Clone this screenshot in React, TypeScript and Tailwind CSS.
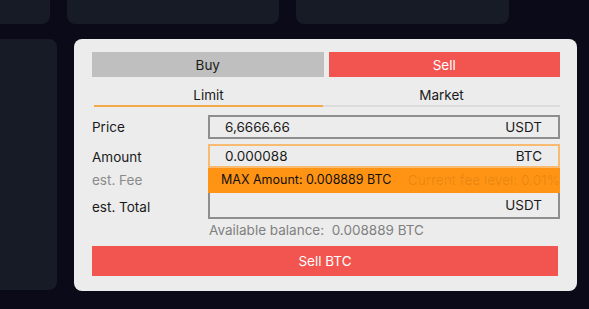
import { FC } from "react"

const Field: FC<{ value?: string; unit: string; border: string }> = ({ value, unit, border }) => (
  <div className={`flex flex-1 items-center justify-between border-2 pl-[15px] pr-[16px] ${border}`}>
    <span>{value}</span>
    <span>{unit}</span>
  </div>
)

const App: FC = () => {
  return (
    <div className="flex h-[309px] w-[589px] flex-col gap-[15px] overflow-hidden bg-[#0a0a19] text-[13.5px] text-[#1a1a1a]" style={{ fontFamily: "Inter, 'Noto Sans', sans-serif" }}>
      <div className="flex h-[24px] gap-[17px]">
        <div className="w-[50px] rounded-br-lg bg-[#161b25]" />
        <div className="w-[212px] rounded-b-lg bg-[#161b25]" />
        <div className="w-[213px] rounded-b-lg bg-[#161b25]" />
      </div>

      <div className="flex gap-[17px]">
        <div className="h-[251px] w-[57px] rounded-r-lg bg-[#161b25]" />

        <div className="flex h-[252px] w-[503px] flex-col rounded-lg bg-[#ececec] pb-[15px] pl-[18px] pr-[17px] pt-[13px]">
          <div className="flex h-[25px] gap-[5px] leading-[26px]">
            <button className="flex-1 bg-[#bfbfbf]">Buy</button>
            <button className="flex-1 bg-[#f25550] text-white">Sell</button>
          </div>

          <div className="mt-[9px] flex h-[21px] pl-[2px]">
            <div className="w-[229px] border-b-2 border-[#f5a94a] text-center leading-[19px]">Limit</div>
            <div className="flex-1 border-b-2 border-[#dcdcdc] text-center leading-[19px]">Market</div>
          </div>

          <div className="mt-[8px] flex h-[24px]">
            <div className="flex w-[116px] items-center">Price</div>
            <Field value="6,6666.66" unit="USDT" border="border-[#8e8e8e]" />
          </div>

          <div className="mt-[5px] flex h-[24px]">
            <div className="flex w-[116px] items-center pt-[2px]">Amount</div>
            <Field value="0.000088" unit="BTC" border="border-[#f8bb72]" />
          </div>

          <div className="flex h-[25px]">
            <div className="flex w-[116px] items-center text-[#8a8a8a]">est. Fee</div>
            <div className="relative flex flex-1 items-center justify-between bg-[#ff9414] pl-[2px] text-black/10">
              <span>0.00000000 USDT</span>
              <span>Current fee level: 0.01%</span>
              <div className="absolute inset-y-0 left-0 flex items-center bg-[#ff9414] pl-[13px] pr-[2px] text-[12.5px] text-[#111]">
                MAX Amount: 0.008889 BTC
              </div>
            </div>
          </div>

          <div className="flex h-[26px]">
            <div className="flex w-[116px] items-center pt-[2px]">est. Total</div>
            <Field unit="USDT" border="border-[#8e8e8e] border-t-0" />
          </div>

          <div className="ml-[117px] mt-[1px] text-[#808080]">Available balance:&nbsp; 0.008889 BTC</div>

          <button className="mt-auto h-[30px] w-[466px] bg-[#f25550] text-white">Sell BTC</button>
        </div>
      </div>
    </div>
  )
}

export default App
